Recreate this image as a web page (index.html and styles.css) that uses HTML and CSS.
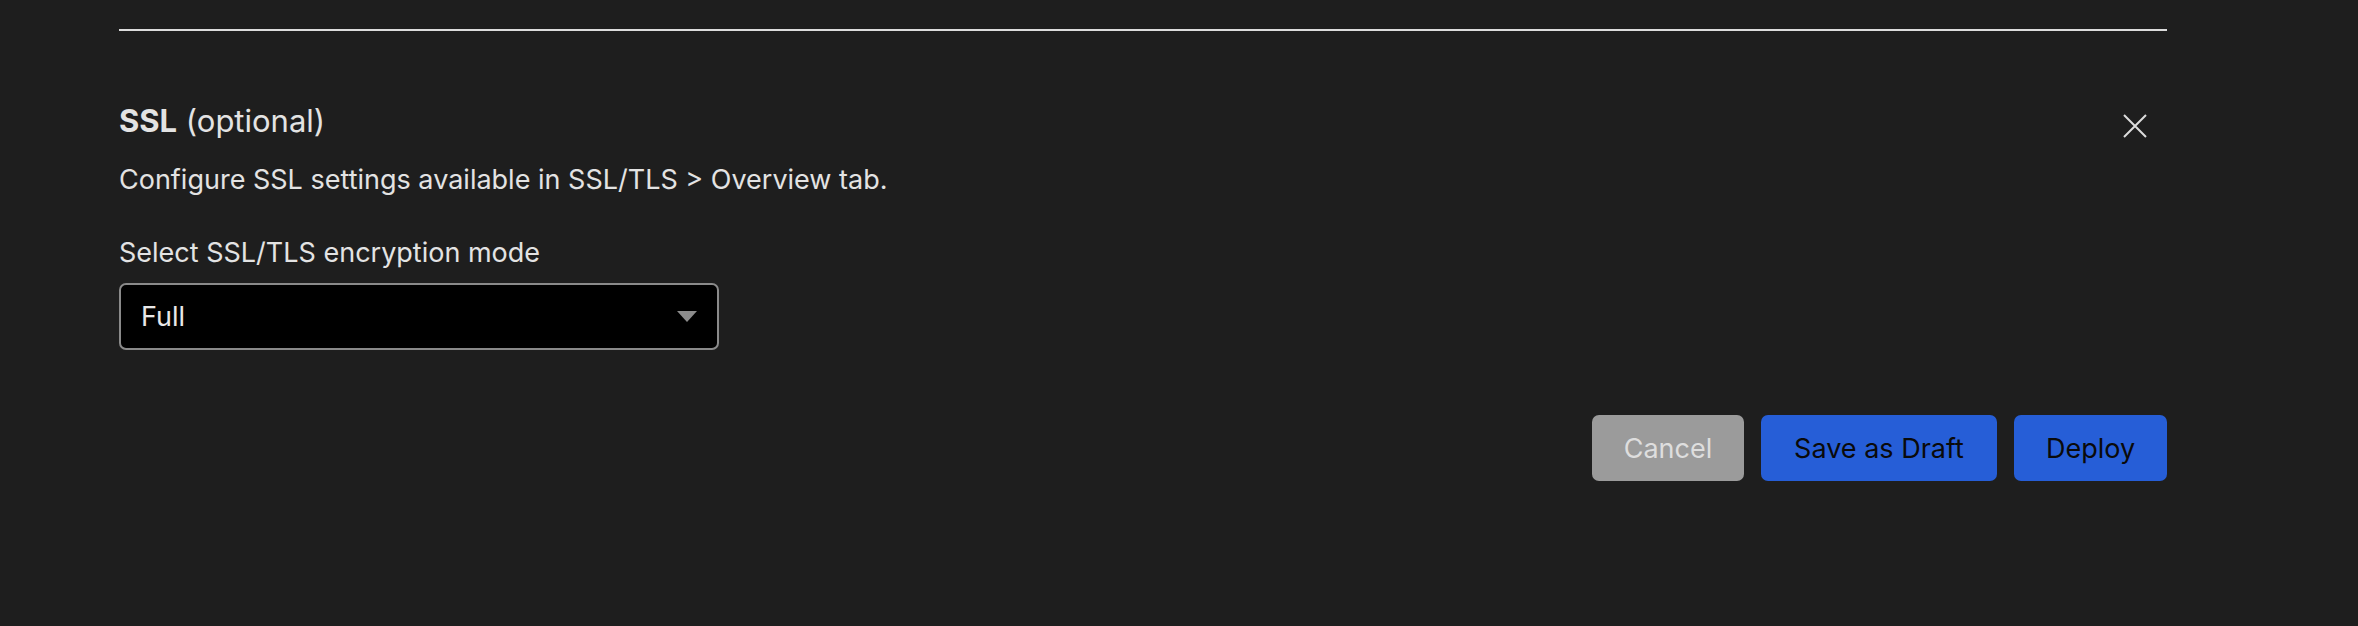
FILE: index.html
```html
<!DOCTYPE html>
<html lang="en">
<head>
  <meta charset="UTF-8">
  <title>SSL</title>
  <link rel="stylesheet" href="styles.css">
</head>
<body>
<div id="app">
  <div class="rule"></div>

  <div class="section">
    <div class="section-head">
      <div class="section-text">
        <h2 class="title"><b>SSL</b> (optional)</h2>
        <p class="desc">Configure SSL settings available in SSL/TLS &gt; Overview tab.</p>
      </div>
      <button class="close" aria-label="Close">
        <svg width="24" height="24" viewBox="0 0 24 24">
          <path d="M1 1 L23 23 M23 1 L1 23" stroke="#dcdcdc" stroke-width="2" fill="none"/>
        </svg>
      </button>
    </div>

    <label class="label" for="mode">Select SSL/TLS encryption mode</label>
    <div class="select">
      <span>Full</span>
      <span class="caret"></span>
    </div>
  </div>

  <div class="actions">
    <button class="btn btn-cancel">Cancel</button>
    <button class="btn btn-blue btn-draft">Save as Draft</button>
    <button class="btn btn-blue btn-deploy">Deploy</button>
  </div>
</div>
</body>
</html>
```

FILE: styles.css
```css
body {
  margin: 0;
  background-color: #1e1e1e;
  font-family: Inter, "Liberation Sans", sans-serif;
  color: #e3e3e3;
}

#app {
  width: 2048px;
  margin-left: 119px;
  padding-top: 29px;
}

.rule {
  height: 2px;
  background-color: #dcdcdc;
}

.section-head {
  display: flex;
  justify-content: space-between;
  margin-top: 72px;
}

.title {
  margin: 0;
  font-size: 31px;
  line-height: 36px;
  font-weight: 400;
}

.title b {
  font-weight: 700;
}

.desc {
  margin: 21px 0 0;
  font-size: 27px;
  line-height: 40px;
}

.close {
  background: none;
  border: none;
  padding: 0;
  margin: 11px 20px 0 0;
  width: 24px;
  height: 24px;
}

.label {
  display: block;
  margin-top: 35px;
  font-size: 27px;
  line-height: 36px;
}

.select {
  margin-top: 12px;
  width: 600px;
  height: 67px;
  box-sizing: border-box;
  border: 2px solid #8a8a8a;
  border-radius: 7px;
  background-color: #000;
  display: flex;
  align-items: center;
  justify-content: space-between;
  padding: 0 20px 0 20px;
  font-size: 27px;
  color: #e8e8e8;
}

.caret {
  width: 0;
  height: 0;
  border-left: 10px solid transparent;
  border-right: 10px solid transparent;
  border-top: 11px solid #8c8c8c;
}

.actions {
  display: flex;
  justify-content: flex-end;
  gap: 17px;
  margin-top: 65px;
}

.btn {
  height: 66px;
  border: none;
  border-radius: 7px;
  font-family: Inter, "Liberation Sans", sans-serif;
  font-size: 27px;
  padding: 0;
}

.btn-cancel {
  width: 152px;
  background-color: #9b9b9b;
  color: #dedede;
}

.btn-blue {
  background-color: #265ed7;
  color: #0a0a0a;
}

.btn-draft {
  width: 236px;
}

.btn-deploy {
  width: 153px;
}
```
